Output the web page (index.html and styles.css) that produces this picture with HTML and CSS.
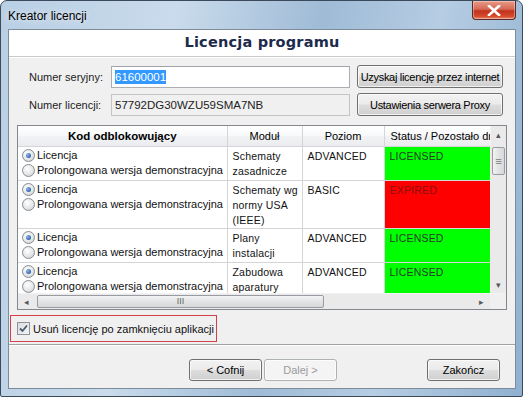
FILE: index.html
```html
<!DOCTYPE html>
<html lang="pl">
  <head>
    <meta charset="UTF-8" />
    <title>Kreator licencji</title>
    <link rel="stylesheet" href="styles.css">
  </head>
  <body>
    <div class="window">
      <div class="titlebar">
        <span class="title">Kreator licencji</span>
        <span class="close-btn">
          <svg width="14" height="11" viewBox="0 0 14 11"><path d="M2 1 L12 10 M12 1 L2 10" stroke="#fff" stroke-width="2.6" stroke-linecap="square"/></svg>
        </span>
      </div>

      <div class="client">
        <div class="banner">Licencja programu</div>

        <div class="form-row">
          <label class="field-label">Numer seryjny:</label>
          <div class="field"><span class="selected">61600001</span></div>
          <button class="btn wide">Uzyskaj licencję przez internet</button>
        </div>
        <div class="form-row second">
          <label class="field-label">Numer licencji:</label>
          <div class="field readonly">57792DG30WZU59SMA7NB</div>
          <button class="btn wide">Ustawienia serwera Proxy</button>
        </div>

        <div class="grid">
          <div class="grid-main">
            <div class="grid-view">
              <table>
                <thead>
                  <tr>
                    <th class="c-code">Kod odblokowujący</th>
                    <th class="c-mod">Moduł</th>
                    <th class="c-lvl">Poziom</th>
                    <th class="c-status">Status / Pozostało dni</th>
                  </tr>
                </thead>
                <tbody>
                  <tr class="row-2">
                    <td class="c-code">
                      <div class="opt"><span class="radio on"></span>Licencja</div>
                      <div class="opt"><span class="radio"></span>Prolongowana wersja demonstracyjna</div>
                    </td>
                    <td>Schematy zasadnicze</td>
                    <td>ADVANCED</td>
                    <td class="ok">LICENSED</td>
                  </tr>
                  <tr class="row-3">
                    <td class="c-code">
                      <div class="opt"><span class="radio on"></span>Licencja</div>
                      <div class="opt"><span class="radio"></span>Prolongowana wersja demonstracyjna</div>
                    </td>
                    <td>Schematy wg normy USA (IEEE)</td>
                    <td>BASIC</td>
                    <td class="bad">EXPIRED</td>
                  </tr>
                  <tr class="row-2">
                    <td class="c-code">
                      <div class="opt"><span class="radio on"></span>Licencja</div>
                      <div class="opt"><span class="radio"></span>Prolongowana wersja demonstracyjna</div>
                    </td>
                    <td>Plany instalacji</td>
                    <td>ADVANCED</td>
                    <td class="ok">LICENSED</td>
                  </tr>
                  <tr class="row-2">
                    <td class="c-code">
                      <div class="opt"><span class="radio on"></span>Licencja</div>
                      <div class="opt"><span class="radio"></span>Prolongowana wersja demonstracyjna</div>
                    </td>
                    <td>Zabudowa aparatury</td>
                    <td>ADVANCED</td>
                    <td class="ok">LICENSED</td>
                  </tr>
                </tbody>
              </table>
            </div>
            <div class="vscroll">
              <span class="arrow">&#9652;</span>
              <span class="vthumb">&#8801;</span>
              <span class="vtrack"></span>
              <span class="arrow">&#9662;</span>
            </div>
          </div>
          <div class="hscroll">
            <span class="arrow">&#9666;</span>
            <span class="hthumb">III</span>
            <span class="htrack"></span>
            <span class="arrow">&#9656;</span>
            <span class="corner"></span>
          </div>
        </div>

        <div class="remove-box">
          <span class="checkbox">
            <svg width="9" height="9" viewBox="0 0 9 9"><path d="M1 4.5 L3.5 7 L8 1.5" stroke="#4a5a6a" stroke-width="1.8" fill="none"/></svg>
          </span>
          Usuń licencję po zamknięciu aplikacji
        </div>

        <div class="separator"></div>

        <div class="nav">
          <button class="btn nav-btn">&lt; Cofnij</button>
          <button class="btn nav-btn disabled">Dalej &gt;</button>
          <span class="spacer"></span>
          <button class="btn nav-btn">Zakończ</button>
        </div>
      </div>
    </div>
  </body>
</html>
```

FILE: styles.css
```css
* { box-sizing: border-box; }
html, body {
  margin: 0;
  padding: 0;
  width: 523px;
  height: 397px;
  overflow: hidden;
  background: #fff;
  font-family: "Liberation Sans", Arial, sans-serif;
  font-size: 11px;
  color: #000;
}
.window {
  width: 523px;
  height: 397px;
  border: 1px solid #3b4a5a;
  border-radius: 7px 7px 2px 2px;
  background: linear-gradient(100deg, #b9cfe4 0%, #c9dbec 30%, #9fbbd6 55%, #b6cde3 75%, #8fb0cf 100%);
  display: flex;
  flex-direction: column;
  padding: 0 6px 7px 7px;
}
.titlebar {
  height: 28px;
  display: flex;
  align-items: flex-start;
  justify-content: space-between;
}
.title {
  font-size: 12px;
  margin-top: 8px;
  color: #000;
  text-shadow: 0 0 6px rgba(255, 255, 255, 0.9);
}
.close-btn {
  width: 44px;
  height: 19px;
  border: 1px solid #5b2b2b;
  border-top: none;
  border-radius: 0 0 4px 4px;
  background: linear-gradient(#e99a88 0%, #d66a56 45%, #c0321c 55%, #d64a2c 85%, #e58a6e 100%);
  display: flex;
  align-items: center;
  justify-content: center;
  box-shadow: inset 0 0 0 1px rgba(255, 255, 255, 0.35);
}
.client {
  flex: 1;
  background: #f0f0f0;
  border: 1px solid #7e8b99;
  display: flex;
  flex-direction: column;
}
.banner {
  height: 27px;
  background: #fff;
  border-bottom: 1px solid #c9c9c9;
  font-family: "DejaVu Sans", Verdana, sans-serif;
  font-weight: bold;
  font-size: 14.5px;
  color: #1c2b4c;
  text-align: center;
  padding-top: 4px;
  letter-spacing: 0.2px;
  box-shadow: 0 1px 0 #fff;
}
.form-row {
  display: flex;
  align-items: center;
  margin-top: 8px;
  padding-left: 20px;
  height: 23px;
}
.form-row.second { margin-top: 5px; }
.field-label {
  width: 82px;
  color: #222;
}
.field {
  width: 239px;
  height: 22px;
  border: 1px solid #abadb3;
  border-top-color: #a0a3aa;
  background: #fff;
  padding: 3px 3px;
  font-size: 11.5px;
  line-height: 14px;
}
.field.readonly {
  background: #f0f0f0;
  border-color: #c2c4c8;
  color: #222;
}
.selected {
  background: #3399ff;
  color: #fff;
  padding: 1px 0;
}
.btn {
  font-family: "Liberation Sans", Arial, sans-serif;
  font-size: 11px;
  color: #000;
  white-space: nowrap;
  border: 1px solid #707070;
  border-radius: 3px;
  background: linear-gradient(#f2f2f2 0%, #ebebeb 48%, #dddddd 52%, #cfcfcf 100%);
  box-shadow: inset 0 0 0 1px rgba(255, 255, 255, 0.7);
  padding: 0;
}
.btn.wide {
  width: 146px;
  height: 23px;
  margin-left: 7px;
  letter-spacing: -0.3px;
}
.grid {
  margin: 9px 0 0 8px;
  width: 490px;
  height: 185px;
  border: 1px solid #828790;
  background: #fff;
  display: flex;
  flex-direction: column;
}
.grid-main {
  display: flex;
  height: 167px;
}
.grid-view {
  width: 472px;
  overflow: hidden;
}
table {
  border-collapse: collapse;
  table-layout: fixed;
  width: 520px;
  font-size: 10.5px;
}
th {
  height: 20px;
  font-size: 11px;
  font-weight: normal;
  background: linear-gradient(#ffffff 0%, #f7f8fa 50%, #f1f2f4 51%, #eaecef 100%);
  border-right: 1px solid #d5d5d5;
  border-bottom: 1px solid #d5d5d5;
  white-space: nowrap;
  overflow: hidden;
  padding: 0;
}
th.c-code { font-weight: bold; font-size: 11.5px; }
.c-code { width: 209px; }
.c-mod { width: 75px; }
.c-lvl { width: 82px; }
.c-status { width: 154px; text-align: left; padding-left: 6px; }
td {
  vertical-align: top;
  border-right: 1px solid #d5d5d5;
  border-bottom: 1px solid #d5d5d5;
  padding: 2px 2px 0 5px;
  line-height: 15px;
  color: #111;
  letter-spacing: 0.2px;
}
td.c-code { padding: 1px 0 0 4px; }
.row-2 td { height: 34px; }
.row-3 td { height: 45px; }
td.ok { background: #00ff00; color: #2a3a2a; }
td.bad { background: #ff0000; color: #8a1010; }
.opt {
  display: flex;
  align-items: center;
  height: 15px;
  white-space: nowrap;
  font-size: 11px;
  letter-spacing: 0;
}
.radio {
  width: 13px;
  height: 13px;
  border-radius: 50%;
  border: 1px solid #8a8f95;
  background: radial-gradient(circle at 40% 35%, #ffffff 0%, #e4e6e8 55%, #c6c9cc 100%);
  margin-right: 2px;
  position: relative;
  flex: none;
}
.radio.on::after {
  content: "";
  position: absolute;
  left: 3px;
  top: 3px;
  width: 5px;
  height: 5px;
  border-radius: 50%;
  background: radial-gradient(circle at 35% 35%, #8fb6e6 0%, #2c5aa8 80%);
}
.vscroll {
  width: 16px;
  display: flex;
  flex-direction: column;
  background: #eaeaea;
  border-left: 1px solid #f3f3f3;
}
.arrow {
  height: 17px;
  display: flex;
  align-items: center;
  justify-content: center;
  color: #55595e;
  font-size: 9px;
  flex: none;
}
.vthumb {
  height: 28px;
  margin: 4px 1px 0;
  border: 1px solid #989ca2;
  border-radius: 2px;
  background: linear-gradient(90deg, #f3f3f3, #e2e3e5 50%, #d7d8da);
  display: flex;
  align-items: center;
  justify-content: center;
  color: #777;
  font-size: 11px;
  flex: none;
}
.vtrack, .htrack { flex: 1; }
.hscroll {
  height: 16px;
  display: flex;
  background: #eaeaea;
  border-top: 1px solid #f3f3f3;
}
.hscroll .arrow { width: 17px; height: 15px; }
.hthumb {
  width: 287px;
  margin: 1px 0 1px 2px;
  border: 1px solid #989ca2;
  border-radius: 2px;
  background: linear-gradient(#f3f3f3, #e2e3e5 50%, #d7d8da);
  display: flex;
  align-items: center;
  justify-content: center;
  color: #666;
  font-size: 9px;
  line-height: 9px;
}
.corner {
  width: 16px;
  background: #f0f0f0;
}
.remove-box {
  margin: 5px 0 0 1px;
  width: 207px;
  height: 27px;
  border: 1px solid #d3404a;
  display: flex;
  align-items: center;
  padding-left: 6px;
  white-space: nowrap;
  color: #111;
}
.checkbox {
  width: 13px;
  height: 13px;
  border: 1px solid #8f9399;
  background: linear-gradient(135deg, #dcdde0, #f4f4f5);
  margin-right: 3px;
  display: flex;
  align-items: center;
  justify-content: center;
}
.separator {
  margin-top: 2px;
  height: 2px;
  border-top: 1px solid #a0a0a0;
  border-bottom: 1px solid #fff;
}
.nav {
  display: flex;
  margin-top: 13px;
  padding: 0 13px 0 180px;
}
.nav-btn {
  width: 73px;
  height: 22px;
  margin-right: 2px;
}
.nav-btn.disabled {
  color: #9a9a9a;
  border-color: #adb2b5;
  background: #f4f4f4;
}
.spacer { flex: 1; }
```
